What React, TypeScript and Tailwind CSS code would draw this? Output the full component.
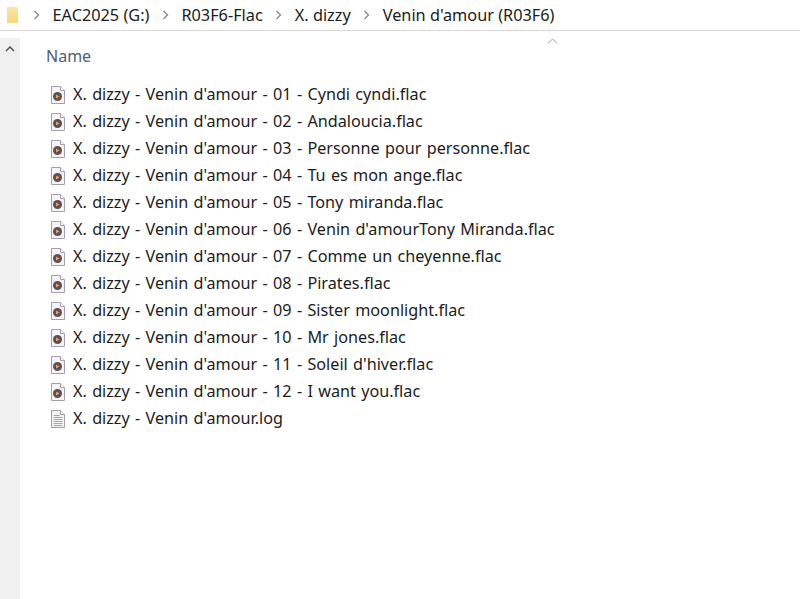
import React from 'react'

const tracks = [
  '01 - Cyndi cyndi.flac',
  '02 - Andaloucia.flac',
  '03 - Personne pour personne.flac',
  '04 - Tu es mon ange.flac',
  '05 - Tony miranda.flac',
  "06 - Venin d'amourTony Miranda.flac",
  '07 - Comme un cheyenne.flac',
  '08 - Pirates.flac',
  '09 - Sister moonlight.flac',
  '10 - Mr jones.flac',
  "11 - Soleil d'hiver.flac",
  '12 - I want you.flac',
]

const prefix = "X. dizzy - Venin d'amour - "
const crumbs = ['EAC2025 (G:)', 'R03F6-Flac', 'X. dizzy', "Venin d'amour (R03F6)"]

const Chevron = () => (
  <svg width="7" height="10" viewBox="0 0 7 10" fill="none" stroke="#8a8a8a" strokeWidth="1.4">
    <path d="M1.5 1l4 4-4 4" />
  </svg>
)

const AudioIcon = () => (
  <svg width="16" height="20" viewBox="0 0 16 20">
    <path d="M1.5 1.5h9l4 4v13h-13z" fill="#f6f3f6" stroke="#a49eb2" />
    <path d="M10.5 1.5v4h4" fill="#fff" stroke="#a49eb2" />
    <circle cx="7.5" cy="11.5" r="4.5" fill="#5c5058" />
    <path d="M6 9.5l3.6 2-3.6 2z" fill="#eda05a" />
  </svg>
)

const LogIcon = () => (
  <svg width="16" height="20" viewBox="0 0 16 20" fill="none">
    <path d="M1.5 1.5h9l4 4v13h-13z" fill="#f4f4f4" stroke="#a0a0a0" />
    <path d="M10.5 1.5v4h4" fill="#fff" stroke="#a0a0a0" />
    <path d="M3.5 6.5h6M3.5 8.5h9M3.5 10.5h9M3.5 12.5h9M3.5 14.5h9M3.5 16.5h9" stroke="#a8a8a8" />
  </svg>
)

const Row = ({ icon, name }: { icon: React.ReactNode; name: string }) => (
  <div className="flex h-[27px] items-center">
    <div className="flex w-[23px] shrink-0 items-center">{icon}</div>
    <span className="whitespace-nowrap">{name}</span>
  </div>
)

export default function App() {
  return (
    <div className="flex h-[599px] w-[800px] flex-col overflow-hidden bg-white text-[16.2px] text-[#1c1c1c] [font-family:'Noto_Sans',sans-serif] [word-spacing:1.1px]">
      <div className="flex h-[31px] shrink-0 items-center border-b border-[#d9d9d9] pl-[7px] text-[16.3px] [word-spacing:0px]">
        <div className="h-[16px] w-[11px] bg-gradient-to-b from-[#fbe6a6] to-[#f7d67c]" />
        <div className="ml-[15px] flex items-center gap-[12.5px]">
          <Chevron />
          {crumbs.map((c, i) => (
            <React.Fragment key={c}>
              {i > 0 && <Chevron />}
              <span className="whitespace-nowrap">{c}</span>
            </React.Fragment>
          ))}
        </div>
      </div>
      <div className="flex flex-1 pt-[7px]">
        <div className="flex w-[20px] shrink-0 justify-center bg-[#f0f0f0] pt-[7px]">
          <svg width="10" height="7" viewBox="0 0 10 7" fill="none" stroke="#505050" strokeWidth="1.5">
            <path d="M1 6l4-4 4 4" />
          </svg>
        </div>
        <div className="relative flex-1 pl-[30px]">
          <svg
            className="absolute left-[527px] top-0"
            width="11"
            height="6"
            viewBox="0 0 11 6"
            fill="none"
            stroke="#9a9a9a"
          >
            <path d="M1 5.5l4.5-4.5 4.5 4.5" />
          </svg>
          <div className="flex h-[32px] items-center pt-[4px] text-[16px] text-[#4c6070]">
            <span className="-ml-[4px]">Name</span>
          </div>
          <div className="mt-[11px]">
            {tracks.map((t) => (
              <Row key={t} icon={<AudioIcon />} name={prefix + t} />
            ))}
            <Row icon={<LogIcon />} name="X. dizzy - Venin d'amour.log" />
          </div>
        </div>
      </div>
    </div>
  )
}
